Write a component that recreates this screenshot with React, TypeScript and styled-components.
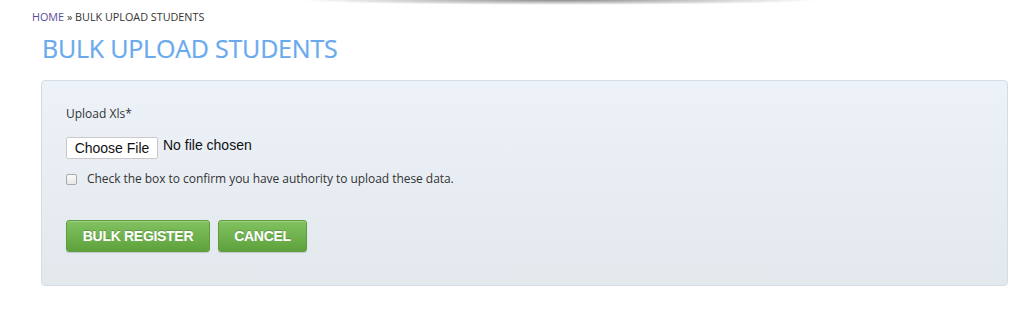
import React from "react";
import styled, { createGlobalStyle } from "styled-components";

const Global = createGlobalStyle`
  html, body { margin: 0; padding: 0; background: #fff; }
  body { font-family: "Open Sans", "Liberation Sans", sans-serif; color: #333; }
  * { box-sizing: border-box; }
`;

const Page = styled.div`
  width: 1024px;
  height: 332px;
  overflow: hidden;
  display: flex;
  flex-direction: column;
`;

const TopShade = styled.div`
  height: 9px;
  background: radial-gradient(ellipse 260px 5px at 560px 0px, rgba(0,0,0,0.45), rgba(0,0,0,0) 100%);
`;

const Content = styled.div`
  padding: 0 16px 0 32px;
  display: flex;
  flex-direction: column;
`;

const Breadcrumb = styled.div`
  font-family: "Open Sans", sans-serif;
  font-size: 10.8px;
  line-height: 16px;
  color: #333;
  text-transform: uppercase;
`;

const CrumbLink = styled.a`
  color: #5a4e9c;
  text-decoration: none;
`;

const Title = styled.h1`
  margin: 8px 0 0 10px;
  font-family: "Open Sans", sans-serif;
  font-weight: 400;
  font-size: 25px;
  line-height: 30px;
  color: #69a9ee;
  letter-spacing: -0.2px;
  -webkit-text-stroke: 0.2px #69a9ee;
`;

const Panel = styled.div`
  margin: 17px 0 0 9px;
  width: 967px;
  height: 206px;
  border: 1px solid #d3dde7;
  border-radius: 4px;
  background: linear-gradient(to bottom, #ecf2f8, #e3e8ed);
  padding: 24px 24px 0 24px;
  display: flex;
  flex-direction: column;
`;

const Label = styled.label`
  font-family: "Open Sans", sans-serif;
  font-size: 12px;
  line-height: 18px;
  color: #333;
`;

const FileRow = styled.div`
  display: flex;
  align-items: flex-start;
  margin-top: 14px;
  gap: 5px;
`;

const FileButton = styled.span`
  display: inline-flex;
  align-items: center;
  justify-content: center;
  width: 92px;
  height: 22px;
  background: #fff;
  border: 1px solid #c9c9c9;
  border-radius: 2px;
  font-family: "Liberation Sans", Arial, sans-serif;
  font-size: 14px;
  color: #111;
`;

const FileText = styled.span`
  font-family: "Liberation Sans", Arial, sans-serif;
  font-size: 14px;
  line-height: 16px;
  color: #111;
`;

const CheckRow = styled.div`
  display: flex;
  align-items: center;
  margin-top: 12px;
  gap: 10px;
`;

const Box = styled.span`
  width: 11px;
  height: 11px;
  border: 1px solid #a9a9a9;
  border-radius: 2px;
  background: linear-gradient(#fafafa, #e8e8e8);
`;

const CheckText = styled.span`
  font-family: "Open Sans", sans-serif;
  font-size: 12px;
  line-height: 16px;
  color: #333;
  letter-spacing: -0.05px;
`;

const Actions = styled.div`
  display: flex;
  gap: 8px;
  margin-top: 33px;
`;

const Button = styled.button<{ $w: number }>`
  width: ${(p) => p.$w}px;
  height: 32px;
  border: 1px solid #5f9e40;
  border-radius: 3px;
  background: linear-gradient(to bottom, #82c261, #5ea23c);
  color: #fff;
  font-family: "Liberation Sans", Arial, sans-serif;
  font-weight: 700;
  font-size: 14px;
  letter-spacing: -0.3px;
  text-shadow: 0 -1px 0 rgba(0,0,0,0.2);
  box-shadow: inset 0 1px 0 rgba(255,255,255,0.2), 0 1px 1px rgba(0,0,0,0.15);
  padding: 0;
  cursor: pointer;
`;

export default function App() {
  return (
    <>
      <Global />
      <Page>
        <TopShade />
        <Content>
          <Breadcrumb>
            <CrumbLink href="#">Home</CrumbLink> » Bulk Upload Students
          </Breadcrumb>
          <Title>BULK UPLOAD STUDENTS</Title>
          <Panel>
            <Label>Upload Xls*</Label>
            <FileRow>
              <FileButton>Choose File</FileButton>
              <FileText>No file chosen</FileText>
            </FileRow>
            <CheckRow>
              <Box />
              <CheckText>Check the box to confirm you have authority to upload these data.</CheckText>
            </CheckRow>
            <Actions>
              <Button $w={144}>BULK REGISTER</Button>
              <Button $w={89}>CANCEL</Button>
            </Actions>
          </Panel>
        </Content>
      </Page>
    </>
  );
}
